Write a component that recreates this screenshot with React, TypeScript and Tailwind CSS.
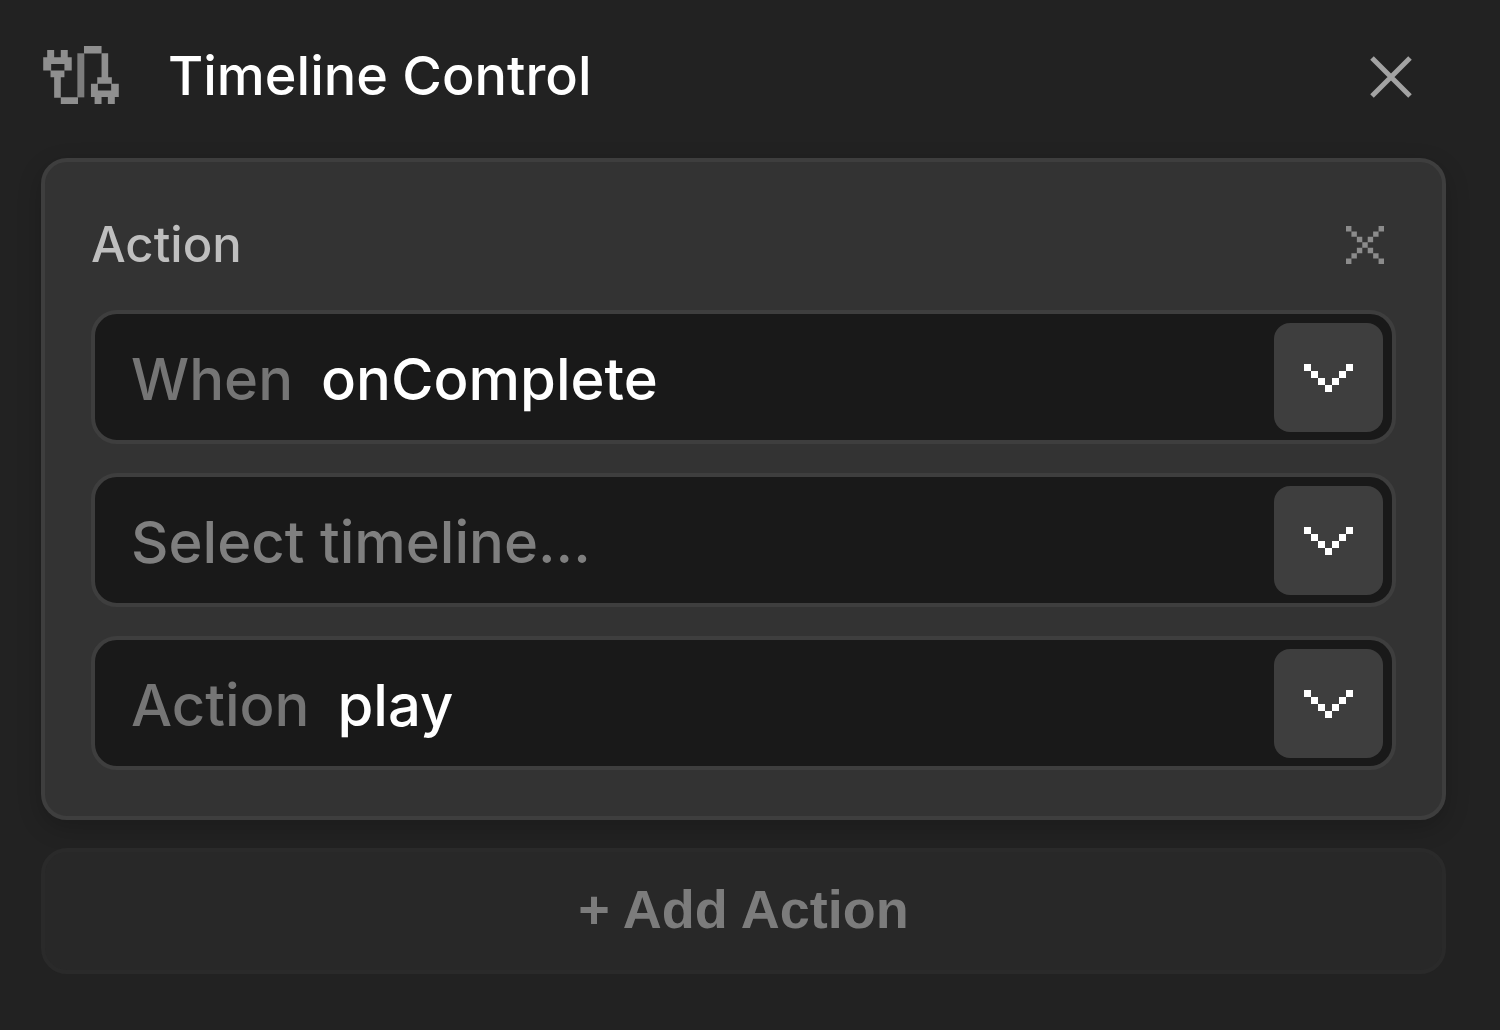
import { useState } from 'react';

type FieldProps = {
  id: string;
  name: string;
  label?: string;
  value: string;
  options: string[];
  placeholder?: string;
  onChange: (value: string) => void;
};

function PlugIcon() {
  return (
    <svg viewBox="0 0 228 175" className="h-[58px] w-[76px] shrink-0" aria-hidden="true">
      <g fill="#8f8f8f">
        <path d="M12 12h21v22h20V12h21v22h12v40H64v20H53v62H33V94H22V74H0V34h12z M24 54v20h40V54z" fillRule="evenodd" />
        <path d="M53 155h52v20H53z M123 0h53v23h-53z" />
        <path d="M176 22h20v72h11v20h21v40h-12v21h-21v-21h-19v21h-21v-21h-11v-40h19V94h13z M165 114v20h40v-20z" fillRule="evenodd" />
      </g>
      <path d="M103 22h21v133h-21z" fill="#7c7c7c" />
    </svg>
  );
}

function CloseIcon() {
  return (
    <svg viewBox="0 0 42 42" className="size-[42px]" fill="none" stroke="#a3a3a3" strokeWidth="5" aria-hidden="true">
      <path d="M2 2l38 38M40 2L2 40" />
    </svg>
  );
}

function PixelCloseIcon() {
  return (
    <svg viewBox="0 0 7 7" className="size-[38px]" fill="#8c8c8c" aria-hidden="true">
      <path d="M0 0h1v1H0zM1 1h1v1H1zM2 2h1v1H2zM3 3h1v1H3zM4 4h1v1H4zM5 5h1v1H5zM6 6h1v1H6zM6 0h1v1H6zM5 1h1v1H5zM4 2h1v1H4zM2 4h1v1H2zM1 5h1v1H1zM0 6h1v1H0z" />
    </svg>
  );
}

function PixelChevron() {
  return (
    <svg viewBox="0 0 7 4" className="h-7 w-[49px]" fill="#ffffff" aria-hidden="true">
      <path d="M0 0h1v1H0zM1 1h1v1H1zM2 2h1v1H2zM3 3h1v1H3zM4 2h1v1H4zM5 1h1v1H5zM6 0h1v1H6z" />
    </svg>
  );
}

function SelectField({ id, name, label, value, options, placeholder, onChange }: FieldProps) {
  return (
    <div className="relative flex h-[134px] items-center rounded-[26px] border-4 border-[#3e3e3e] bg-[#191919] pt-1 pl-9 text-[58px] font-medium">
      {label && (
        <label htmlFor={id} className="mr-7 text-[#757575]">
          {label}
        </label>
      )}
      <select
        id={id}
        aria-label={label ? undefined : name}
        value={value}
        onChange={(e) => onChange(e.target.value)}
        className={`h-full min-w-0 flex-1 appearance-none bg-transparent pr-32 outline-none ${
          value ? 'text-white' : 'text-[#7f7f7f]'
        }`}
      >
        {placeholder && <option value="">{placeholder}</option>}
        {options.map((o) => (
          <option key={o} value={o}>
            {o}
          </option>
        ))}
      </select>
      <span className="pointer-events-none absolute top-[9px] right-[9px] flex size-[109px] items-center justify-center rounded-2xl bg-[#3e3e3e]">
        <PixelChevron />
      </span>
    </div>
  );
}

export default function App() {
  const [event, setEvent] = useState('onComplete');
  const [timeline, setTimeline] = useState('');
  const [action, setAction] = useState('play');

  return (
    <main className="min-h-screen bg-[#222222] pr-[54px] pb-14 pl-[41px] font-['Inter',sans-serif]">
      <header className="flex h-[158px] items-center pr-[34px] pb-2 pl-[2px]">
        <PlugIcon />
        <h1 className="ml-[49px] flex-1 text-[54px] font-medium text-white">Timeline Control</h1>
        <button type="button" aria-label="Close panel" className="mt-1">
          <CloseIcon />
        </button>
      </header>

      <section
        aria-labelledby="action-title"
        className="rounded-[26px] border-4 border-[#3e3e3e] bg-[#333333] px-[46px] pb-[46px] shadow-[0_8px_24px_rgba(0,0,0,0.2)]"
      >
        <div className="flex h-[148px] items-center justify-between pt-[18px] pr-3">
          <h2 id="action-title" className="text-[49px] font-medium text-[#bfbfbf]">
            Action
          </h2>
          <button type="button" aria-label="Remove action">
            <PixelCloseIcon />
          </button>
        </div>
        <div className="flex flex-col gap-[29px]">
          <SelectField
            id="event"
            name="Event"
            label="When"
            value={event}
            options={['onStart', 'onUpdate', 'onComplete']}
            onChange={setEvent}
          />
          <SelectField
            id="timeline"
            name="Timeline"
            value={timeline}
            options={['Timeline 1']}
            placeholder="Select timeline..."
            onChange={setTimeline}
          />
          <SelectField
            id="action"
            name="Action"
            label="Action"
            value={action}
            options={['play', 'pause', 'reverse', 'restart']}
            onChange={setAction}
          />
        </div>
      </section>

      <button
        type="button"
        className="mt-7 h-[126px] w-full rounded-[26px] border-4 border-[#2a2a2a] bg-[#282828] pb-1 font-['Liberation_Sans',Arial,sans-serif] text-[54px] font-bold text-[#7c7c7c]"
      >
        + Add Action
      </button>
    </main>
  );
}
